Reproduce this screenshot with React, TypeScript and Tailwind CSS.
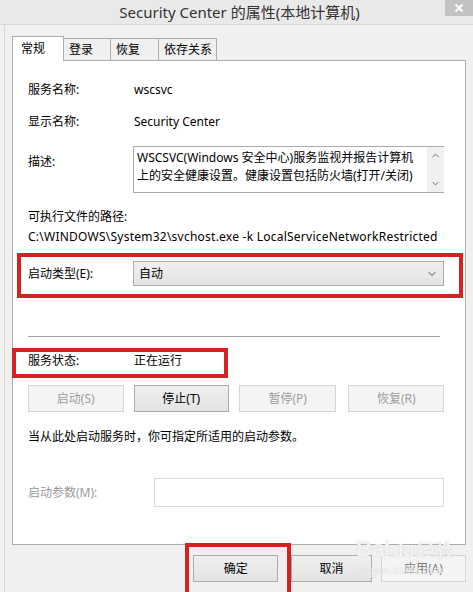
import { ChevronDown, ChevronUp } from "lucide-react";

const font = "font-['Noto_Sans','Noto_Sans_CJK_SC',sans-serif]";

function Label({ children, gray }: { children: React.ReactNode; gray?: boolean }) {
  return <div className={`w-[106px] shrink-0 ${gray ? "text-[#9a9a9a]" : "text-black"}`}>{children}</div>;
}

function Btn({ children, disabled, className = "" }: { children: React.ReactNode; disabled?: boolean; className?: string }) {
  return (
    <div
      className={`h-[27px] flex items-center justify-center border ${
        disabled ? "border-[#d5d5d5] bg-[#f4f4f4] text-[#9d9d9d]" : "border-[#acacac] bg-gradient-to-b from-[#f0f0f0] to-[#e3e3e3] text-black"
      } ${className}`}
    >
      {children}
    </div>
  );
}

export default function App() {
  return (
    <div className={`relative w-[473px] h-[592px] overflow-hidden bg-[#f0f0f0] text-[12px] leading-[20px] ${font}`}>
      {/* title bar */}
      <div className="relative h-[25px] bg-[#e9e9e9] border-b border-[#dadada] flex items-center justify-center">
        <span className="text-[15px] text-[#333] pl-[6px]">Security Center 的属性(本地计算机)</span>
        <div className="absolute right-0 top-0 w-[28px] h-[16px] bg-[#c2c2c2] flex items-center justify-center">
          <svg width="10" height="10" viewBox="0 0 10 10">
            <path d="M1.5 1.5 L8.5 8.5 M8.5 1.5 L1.5 8.5" stroke="#fff" strokeWidth="1.8" />
          </svg>
        </div>
      </div>

      <div className="h-[567px] ml-[4px] border-l border-[#d9d9d9] pl-[7px] pr-[7px] pt-[10px]">
        {/* tabs */}
        <div className="flex items-end h-[25px]">
          <div className="h-[25px] w-[52px] bg-white border border-b-0 border-[#adadad] pl-[8px] flex items-center relative z-10 -mb-px">
            常规
          </div>
          <div className="h-[22px] w-[47px] border border-l-0 border-b-0 border-[#adadad] bg-[#f0f0f0] pl-[5px] flex items-center">登录</div>
          <div className="h-[22px] w-[48px] border border-l-0 border-b-0 border-[#adadad] bg-[#f0f0f0] pl-[5px] flex items-center">恢复</div>
          <div className="h-[22px] w-[58px] border border-l-0 border-b-0 border-[#adadad] bg-[#f0f0f0] pl-[5px] flex items-center">依存关系</div>
        </div>

        {/* panel */}
        <div className="w-[454px] h-[485px] bg-white border border-[#adadad] pl-[15px] pr-[21px] pt-[19px]">
          <div className="flex h-[20px]">
            <Label>服务名称:</Label>
            <div>wscsvc</div>
          </div>
          <div className="flex h-[20px] mt-[12px]">
            <Label>显示名称:</Label>
            <div>Security Center</div>
          </div>
          <div className="flex mt-[14px]">
            <Label>
              <div className="pt-[6px]">描述:</div>
            </Label>
            <div className="flex w-[311px] h-[47px] border-t border-l border-b border-[#ababab] -ml-px">
              <div className="flex-1 pl-[3px] pt-[2px] leading-[18px] whitespace-nowrap">
                WSCSVC(Windows 安全中心)服务监视并报告计算机
                <br />
                上的安全健康设置。健康设置包括防火墙(打开/关闭)
              </div>
              <div className="w-[17px] bg-[#f0f0f0] flex flex-col justify-between items-center py-[3px]">
                <ChevronUp size={11} strokeWidth={2} color="#606060" />
                <ChevronDown size={11} strokeWidth={2} color="#606060" />
              </div>
            </div>
          </div>
          <div className="h-[20px] mt-[14px]">可执行文件的路径:</div>
          <div className="h-[20px] tracking-[0.24px] whitespace-nowrap">C:\WINDOWS\System32\svchost.exe -k LocalServiceNetworkRestricted</div>

          <div className="flex items-center mt-[14px] h-[25px]">
            <Label>启动类型(E):</Label>
            <div className="w-[311px] h-[25px] border border-[#acacac] bg-gradient-to-b from-[#f0f0f0] to-[#e4e4e4] flex items-center justify-between pl-[5px] pr-[5px] -ml-px">
              <span>自动</span>
              <ChevronDown size={12} strokeWidth={2} color="#505050" />
            </div>
          </div>

          <div className="mt-[50px] h-px bg-[#a0a0a0] w-[412px]" />

          <div className="flex h-[20px] mt-[14px]">
            <Label>服务状态:</Label>
            <div>正在运行</div>
          </div>

          <div className="flex mt-[14px] gap-[10px]">
            <Btn disabled className="w-[96px]">启动(S)</Btn>
            <Btn className="w-[96px]">停止(T)</Btn>
            <Btn disabled className="w-[98px]">暂停(P)</Btn>
            <Btn disabled className="w-[96px] ml-[2px]">恢复(R)</Btn>
          </div>

          <div className="h-[20px] mt-[15px]">当从此处启动服务时，你可指定所适用的启动参数。</div>

          <div className="flex items-center mt-[31px]">
            <div className="w-[126px] text-[#9a9a9a]">启动参数(M):</div>
            <div className="w-[291px] h-[29px] border border-[#d9d9d9] bg-white" />
          </div>
        </div>

        {/* bottom buttons */}
        <div className="flex mt-[10px] pl-[181px] gap-[14px]">
          <Btn className="w-[86px]">确定</Btn>
          <Btn className="w-[81px] -ml-[1px]">取消</Btn>
          <Btn disabled className="w-[86px] -ml-[5px] text-[#777]">应用(A)</Btn>
        </div>
      </div>

      {/* red annotation boxes */}
      <div className="absolute left-[17px] top-[253px] w-[446px] h-[45px] border-[4px] border-[#d42222]" />
      <div className="absolute left-[12px] top-[348px] w-[216px] h-[30px] border-[4px] border-[#d42222]" />
      <div className="absolute left-[185px] top-[543px] w-[106px] h-[60px] border-[4px] border-[#d42222]" />

      {/* watermark */}
      <div className="absolute left-[356px] top-[538px] text-white/80 pointer-events-none leading-none">
        <div className="flex items-end gap-[2px] font-['Liberation_Sans','Noto_Sans_CJK_SC',sans-serif] text-[22px] font-bold [text-shadow:0_0_1px_#bdbdbd]">
          <span>Bai</span>
          <span className="text-[18px]">du</span>
          <span className="text-[18px]">经验</span>
        </div>
        <div className="text-[10px] mt-[5px] text-white/60 [text-shadow:0_0_1px_#cfcfcf]">jingyan.baidu.com</div>
      </div>
    </div>
  );
}
